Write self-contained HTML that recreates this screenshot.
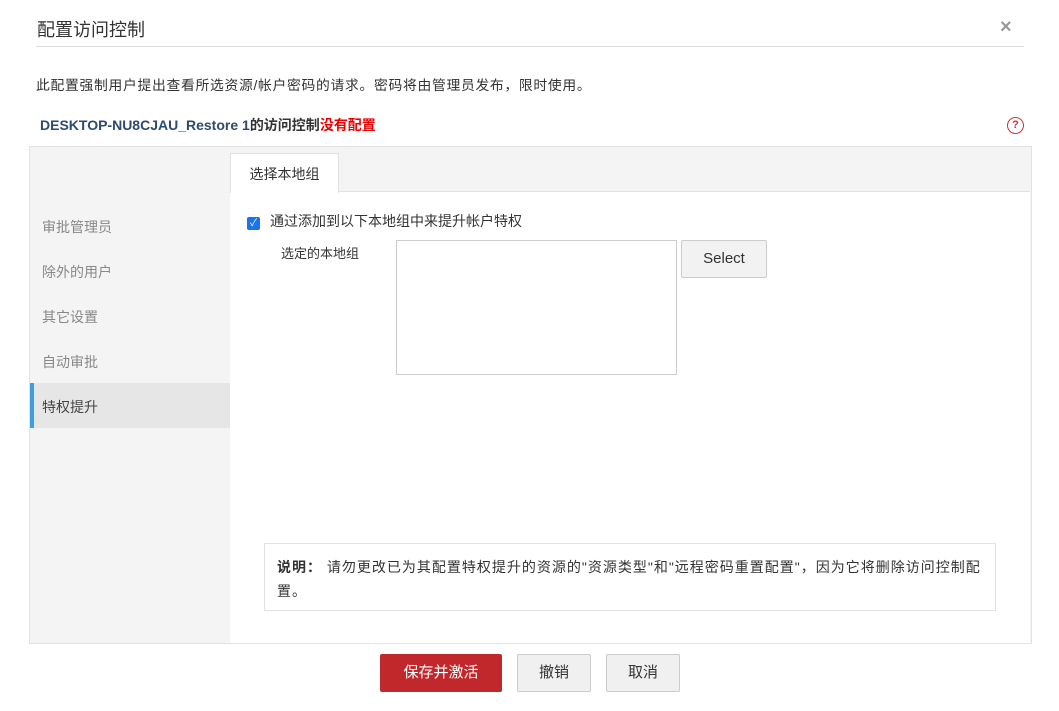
<!DOCTYPE html>
<html><head><meta charset="utf-8"><style>
body{margin:0;width:1059px;height:711px;background:#fff;font-family:"Liberation Sans","Noto Sans CJK SC",sans-serif;color:#333;position:relative;overflow:hidden}
.a{position:absolute}
</style></head><body>
<div class="a" style="left:37px;top:16px;font-size:18px;color:#333">配置访问控制</div>
<div class="a" style="left:1000px;top:16px;font-size:20px;color:#999;font-weight:bold">×</div>
<div class="a" style="left:36px;top:46px;width:988px;height:1px;background:#ddd"></div>
<div class="a" style="left:36px;top:74px;font-size:13.8px;letter-spacing:0.7px">此配置强制用户提出查看所选资源/帐户密码的请求。密码将由管理员发布，限时使用。</div>
<div class="a" style="left:40px;top:115px;font-size:14px;font-weight:bold;color:#2d4a6f">DESKTOP-NU8CJAU_Restore 1<span style="color:#333">的访问控制</span><span style="color:#e00">没有配置</span></div>
<div class="a" style="left:1007px;top:117px;width:17px;height:17px;border:1.5px solid #c33;border-radius:50%;box-sizing:border-box;font-size:11px;color:#c33;text-align:center;line-height:14px;font-weight:bold">?</div>
<div class="a" style="left:29px;top:146px;width:1001px;height:496px;background:#f4f4f4;border:1px solid #e2e2e2"></div>
<div class="a" style="left:230px;top:191px;width:800px;height:451px;background:#fff;border-top:1px solid #e2e2e2"></div>
<div class="a" style="left:230px;top:153px;width:107px;height:39px;background:#fff;border:1px solid #e2e2e2;border-bottom:none;font-size:14px;line-height:40px;text-align:center;color:#333">选择本地组</div>
<div class="a" style="left:42px;top:217px;font-size:14px;color:#888">审批管理员</div>
<div class="a" style="left:42px;top:262px;font-size:14px;color:#888">除外的用户</div>
<div class="a" style="left:42px;top:307px;font-size:14px;color:#888">其它设置</div>
<div class="a" style="left:42px;top:352px;font-size:14px;color:#888">自动审批</div>
<div class="a" style="left:30px;top:383px;width:200px;height:45px;background:#e6e6e6;border-left:4px solid #3aa0e0;box-sizing:border-box"></div>
<div class="a" style="left:42px;top:397px;font-size:14px;color:#444">特权提升</div>
<div class="a" style="left:247px;top:217px;width:13px;height:13px;background:#1a73e8;border-radius:2px;color:#fff;font-size:10px;line-height:13px;text-align:center">✓</div>
<div class="a" style="left:270px;top:211px;font-size:14px">通过添加到以下本地组中来提升帐户特权</div>
<div class="a" style="left:281px;top:243px;font-size:13px">选定的本地组</div>
<div class="a" style="left:396px;top:240px;width:281px;height:135px;border:1px solid #ccc;box-sizing:border-box;background:#fff"></div>
<div class="a" style="left:681px;top:240px;width:86px;height:38px;border:1px solid #ccc;box-sizing:border-box;background:#f2f2f2;border-radius:2px;font-size:15px;text-align:center;line-height:36px">Select</div>
<div class="a" style="left:264px;top:543px;width:732px;height:68px;border:1px solid #e2e2e2;box-sizing:border-box;background:#fff"></div>
<div class="a" style="left:277px;top:555px;width:712px;font-size:14px;line-height:24px;letter-spacing:1px">
<b>说明：</b> 请勿更改已为其配置特权提升的资源的"资源类型"和"远程密码重置配置"，因为它将删除访问控制配置。</div>
<div class="a" style="left:380px;top:654px;width:122px;height:38px;background:#c0282b;border-radius:2px;color:#fff;font-size:15px;text-align:center;line-height:38px">保存并激活</div>
<div class="a" style="left:517px;top:654px;width:74px;height:38px;background:#f0f0f0;border:1px solid #ccc;box-sizing:border-box;border-radius:2px;font-size:15px;text-align:center;line-height:36px">撤销</div>
<div class="a" style="left:606px;top:654px;width:74px;height:38px;background:#f0f0f0;border:1px solid #ccc;box-sizing:border-box;border-radius:2px;font-size:15px;text-align:center;line-height:36px">取消</div>
</body></html>
